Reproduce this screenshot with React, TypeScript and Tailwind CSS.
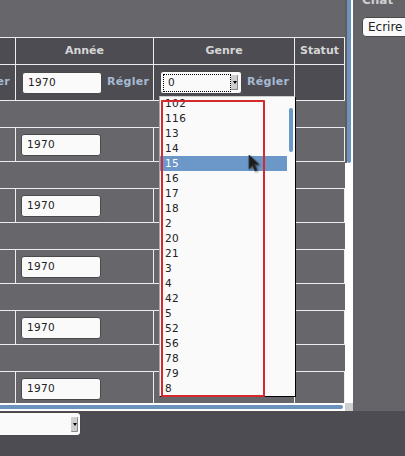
import type { ReactNode } from "react";

const GENRES = ["102", "116", "13", "14", "15", "16", "17", "18", "2", "20", "21", "3", "4", "42", "5", "52", "56", "78", "79", "8"];

const LINE = "border-[#ececec]";

function Cell({ width, children, className = "" }: { width: string; children?: ReactNode; className?: string }) {
  return <div className={`flex h-full shrink-0 items-center border-r ${LINE} ${width} ${className}`}>{children}</div>;
}

function YearInput({ className = "" }: { className?: string }) {
  return (
    <div className={`flex h-[22px] w-[80px] items-center rounded-[3px] border border-[#4a4a4a] bg-[#fafafa] pl-[5px] text-[10.5px] tracking-[0.3px] text-[#222] ${className}`}>
      1970
    </div>
  );
}

function SetButton() {
  return <span className="shrink-0 whitespace-nowrap text-[11px] font-bold tracking-[0.3px] text-[#a6bbd3]">Régler</span>;
}

function SelectArrow() {
  return (
    <div className="flex h-[15px] w-[7px] items-center justify-center rounded-[1px] bg-[#cfcfcf] shadow-[inset_-1px_-1px_0_#8a8a8a]">
      <div className="h-0 w-0 border-x-[2.5px] border-t-[3px] border-x-transparent border-t-black" />
    </div>
  );
}

function DataRow() {
  return (
    <div className={`flex h-[34px] shrink-0 border-b ${LINE}`}>
      <Cell width="w-[16px]" />
      <Cell width="w-[138px]">
        <YearInput className="ml-[5px]" />
      </Cell>
      <Cell width="w-[141px]" />
      <Cell width="w-[50px]" />
    </div>
  );
}

function SpacerRow() {
  return <div className={`h-[27px] shrink-0 border-b ${LINE}`} />;
}

function Table() {
  return (
    <div className={`flex min-h-0 flex-1 flex-col overflow-hidden border-t ${LINE} bg-[#67666b]`}>
      <div className={`flex h-[27px] shrink-0 border-b ${LINE} bg-[#4d4c52] text-[11px] font-bold text-[#d6d6d6]`}>
        <Cell width="w-[16px]" />
        <Cell width="w-[138px]" className="justify-center">Année</Cell>
        <Cell width="w-[141px]" className="justify-center">Genre</Cell>
        <Cell width="w-[50px]" className="justify-center">Statut</Cell>
      </div>

      <div className={`flex h-[36px] shrink-0 border-b ${LINE} bg-[#4d4c52]`}>
        <Cell width="w-[16px]" className="justify-end overflow-hidden pr-[5px]">
          <SetButton />
        </Cell>
        <Cell width="w-[138px]" className="gap-[5px]">
          <YearInput className="ml-[6px]" />
          <SetButton />
        </Cell>
        <Cell width="w-[141px]" className="gap-[5px]">
          <div className="ml-[6px] flex h-[23px] w-[82px] items-center rounded-[3px] border border-[#4a4a4a] bg-[#fafafa] pl-[2px] pr-[3px]">
            <div className="flex h-[18px] flex-1 items-center border border-dotted border-black pl-[4px] text-[10.5px] text-[#222]">0</div>
            <SelectArrow />
          </div>
          <SetButton />
        </Cell>
        <Cell width="w-[50px]" />
      </div>

      {[0, 1, 2, 3, 4].map((i) => (
        <div key={i} className="contents">
          <SpacerRow />
          <DataRow />
        </div>
      ))}
    </div>
  );
}

function VScroll() {
  return (
    <div className="flex w-[8px] flex-col bg-white">
      <div className="flex h-[163px]">
        <div className="w-[2px] bg-[#5e5d62]" />
        <div className="w-[4px] rounded-b-[2px] bg-[#6b93bd]" />
      </div>
    </div>
  );
}

function HScroll() {
  return (
    <div className="flex h-[8px]">
      <div className="flex w-[345px] items-center bg-white">
        <div className="h-[4px] w-[343px] rounded-r-[2px] bg-[#6b93bd]" />
      </div>
      <div className="w-[8px] bg-[#cfcfcf]" />
    </div>
  );
}

function ChatPanel() {
  return (
    <div className="flex w-[52px] flex-col bg-[#656469] pl-[9px]">
      <span className="-mt-[7px] h-[15px] text-[12px] font-bold leading-[15px] text-[#cfcfcf]">Chat</span>
      <div className="mt-[9px] flex h-[20px] w-[60px] items-center rounded-[4px] border border-[#4a4a4a] bg-[#fafafa] pl-[5px] text-[12px] text-[#222]">
        Ecrire
      </div>
    </div>
  );
}

function BottomBar() {
  return (
    <div className="flex h-[45px] items-start bg-[#4d4c52] pt-[1px]">
      <div className="flex h-[24px] w-[81px] items-center justify-end rounded-r-[4px] border border-l-0 border-[#4a4a4a] bg-[#fafafa] pr-[2px]">
        <SelectArrow />
      </div>
    </div>
  );
}

function GenreList() {
  return (
    <div className="absolute left-[159px] top-[96px] flex h-[301px] w-[137px] overflow-hidden border border-b-black border-l-[#a9a9a9] border-r-black border-t-[#cfcfcf] bg-[#fafafa]">
      <div className="-mt-[1px] flex w-[127px] flex-col">
        {GENRES.map((g) => (
          <div
            key={g}
            className={`flex h-[15px] shrink-0 items-center pl-[5px] text-[10.5px] tracking-[0.4px] ${g === "15" ? "bg-[#6b98c8] text-white" : "text-[#222]"}`}
          >
            {g}
          </div>
        ))}
      </div>
      <div className="flex w-[8px] justify-center pt-[11px]">
        <div className="h-[44px] w-[4px] rounded-[2px] bg-[#6b98c8]" />
      </div>
    </div>
  );
}

export default function App() {
  return (
    <div className="relative h-[456px] w-[405px] overflow-hidden bg-[#4d4c52] font-['DejaVu_Sans',sans-serif]">
      <div className="flex h-[411px]">
        <div className="flex w-[353px] flex-col">
          <div className="flex h-[403px]">
            <div className="flex w-[345px] flex-col">
              <div className="h-[37px] shrink-0 bg-[#67666b]" />
              <Table />
            </div>
            <VScroll />
          </div>
          <HScroll />
        </div>
        <ChatPanel />
      </div>
      <BottomBar />

      <GenreList />

      {/* highlight frame around the option column */}
      <div className="absolute left-[161px] top-[100px] h-[297px] w-[104px] rounded-[1px] border-2 border-[#d42a2e]" />

      {/* mouse pointer */}
      <svg className="absolute left-[248px] top-[154px] drop-shadow-[1px_1px_1px_rgba(0,0,0,0.5)]" width="14" height="19" viewBox="0 0 14 19">
        <path d="M1 1 L1 15 L4.5 11.5 L7 17 L9 16 L6.5 10.5 L11 10.5 Z" fill="#1c1c1c" stroke="#3a3a3a" strokeWidth="0.8" />
      </svg>
    </div>
  );
}
